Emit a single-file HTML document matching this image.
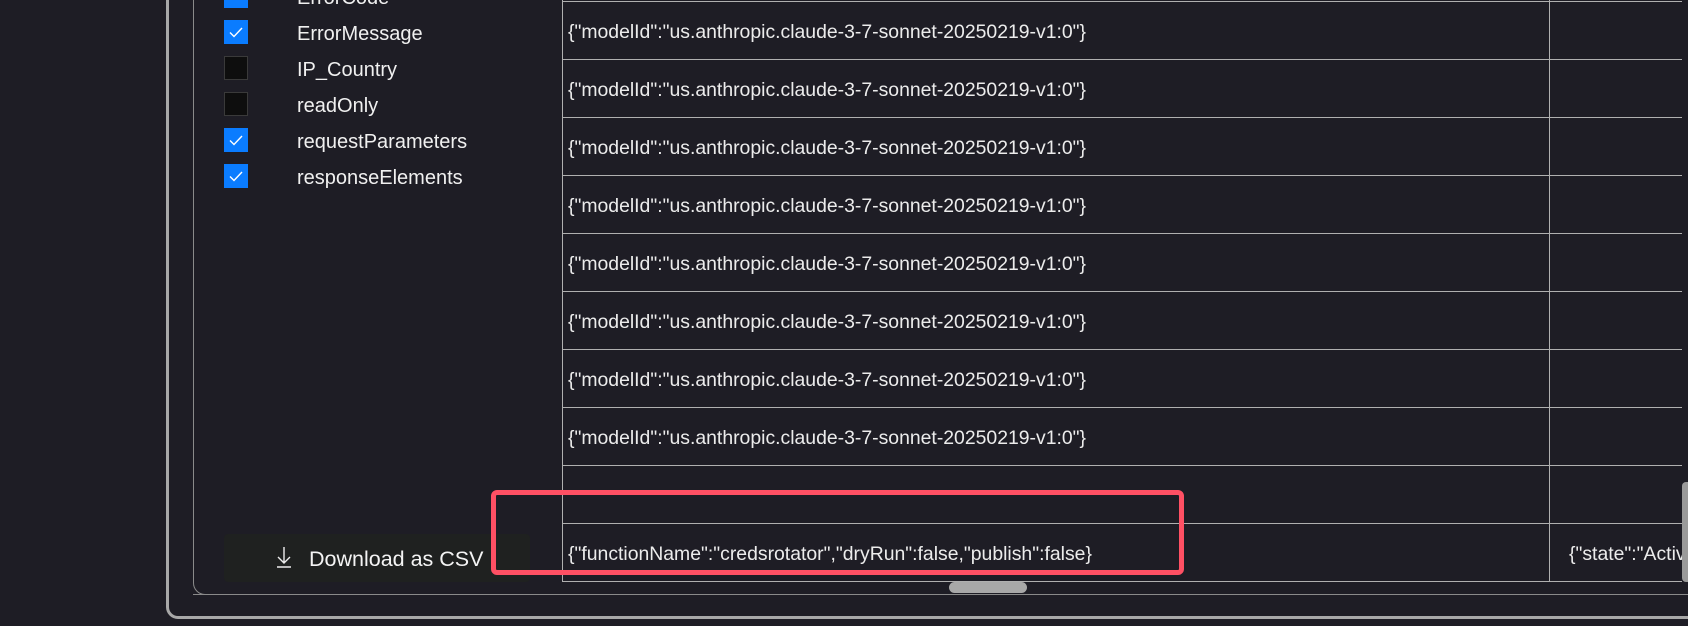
<!DOCTYPE html>
<html><head><style>
body{margin:0;width:1688px;height:626px;background:#1e1d25;overflow:hidden;position:relative;font-family:"Liberation Sans",sans-serif;color:#f0f0f0}
.outer{position:absolute;left:166px;top:-20px;width:1600px;height:639px;border:3px solid #a8a8a8;border-radius:12px;box-sizing:border-box}
.inner{position:absolute;left:193px;top:-20px;width:1600px;height:615px;border:1px solid #8a8a8a;border-radius:12px;box-sizing:border-box}
.cb{position:absolute;left:224px;width:24px;height:24px;box-sizing:border-box}
.on{background:#0a7cff}
.off{background:#0e0e0e;border:1px solid #3a3a3a}
.lbl{position:absolute;left:297px;font-size:20px;line-height:24px;margin-top:2px}
.tbl{position:absolute;left:562px;top:0;width:1120px;height:600px;overflow:hidden}
.h{position:absolute;left:0;width:1120px;height:1px;background:#b0b0b0}
.v{position:absolute;top:0;width:1px;height:582px;background:#b0b0b0}
.t{position:absolute;left:6px;font-size:19.4px;color:#ececec;white-space:nowrap;line-height:20px;margin-top:2px}
</style></head><body>
<div class="outer"></div>
<div class="inner"></div>
<div class="cb on" style="top:-16px"></div>
<div class="lbl" style="top:-16px">ErrorCode</div>
<svg style="position:absolute;left:224px;top:20px" width="24" height="24"><rect width="24" height="24" fill="#0a7cff"/><path d="M6 12.5l4 4 8-8.5" stroke="#fff" stroke-width="1.4" fill="none"/></svg>
<div class="lbl" style="top:20px">ErrorMessage</div>
<div class="cb off" style="top:56px"></div>
<div class="lbl" style="top:56px">IP_Country</div>
<div class="cb off" style="top:92px"></div>
<div class="lbl" style="top:92px">readOnly</div>
<svg style="position:absolute;left:224px;top:128px" width="24" height="24"><rect width="24" height="24" fill="#0a7cff"/><path d="M6 12.5l4 4 8-8.5" stroke="#fff" stroke-width="1.4" fill="none"/></svg>
<div class="lbl" style="top:128px">requestParameters</div>
<svg style="position:absolute;left:224px;top:164px" width="24" height="24"><rect width="24" height="24" fill="#0a7cff"/><path d="M6 12.5l4 4 8-8.5" stroke="#fff" stroke-width="1.4" fill="none"/></svg>
<div class="lbl" style="top:164px">responseElements</div>

<div class="tbl">
<div class="v" style="left:0"></div>
<div class="v" style="left:987px"></div>
<div class="h" style="top:1px"></div><div class="h" style="top:59px"></div><div class="h" style="top:117px"></div><div class="h" style="top:175px"></div><div class="h" style="top:233px"></div><div class="h" style="top:291px"></div><div class="h" style="top:349px"></div><div class="h" style="top:407px"></div><div class="h" style="top:465px"></div><div class="h" style="top:523px"></div><div class="h" style="top:581px"></div>
<div class="t" style="top:20px">{"modelId":"us.anthropic.claude-3-7-sonnet-20250219-v1:0"}</div>
<div class="t" style="top:78px">{"modelId":"us.anthropic.claude-3-7-sonnet-20250219-v1:0"}</div>
<div class="t" style="top:136px">{"modelId":"us.anthropic.claude-3-7-sonnet-20250219-v1:0"}</div>
<div class="t" style="top:194px">{"modelId":"us.anthropic.claude-3-7-sonnet-20250219-v1:0"}</div>
<div class="t" style="top:252px">{"modelId":"us.anthropic.claude-3-7-sonnet-20250219-v1:0"}</div>
<div class="t" style="top:310px">{"modelId":"us.anthropic.claude-3-7-sonnet-20250219-v1:0"}</div>
<div class="t" style="top:368px">{"modelId":"us.anthropic.claude-3-7-sonnet-20250219-v1:0"}</div>
<div class="t" style="top:426px">{"modelId":"us.anthropic.claude-3-7-sonnet-20250219-v1:0"}</div>
<div class="t" style="top:542px">{"functionName":"credsrotator","dryRun":false,"publish":false}</div>
<div class="t" style="top:542px;left:1007px">{"state":"Active"}</div>
</div>
<div style="position:absolute;left:193px;top:594px;width:1490px;height:1px;background:#8a8a8a"></div>
<div style="position:absolute;left:1682px;top:482px;width:6px;height:100px;background:#9a9a9a;border-radius:4px 0 0 4px"></div>
<div style="position:absolute;left:949px;top:582px;width:78px;height:11px;background:#a8a8a8;border-radius:6px"></div>

<div style="position:absolute;left:224px;top:534px;width:306px;height:48px;background:#1f2120;border-radius:4px"></div>
<svg style="position:absolute;left:275px;top:545px" width="18" height="24"><path d="M9 2v16M3 12l6 6 6-6M2 22h14" stroke="#eee" stroke-width="1.4" fill="none"/></svg>
<div style="position:absolute;left:309px;top:546px;font-size:21.5px;line-height:26px;color:#f4f4f4">Download as CSV</div>

<div style="position:absolute;left:491px;top:490px;width:693px;height:85px;border:5px solid #ff5064;border-radius:6px;box-sizing:border-box"></div>
</body></html>
